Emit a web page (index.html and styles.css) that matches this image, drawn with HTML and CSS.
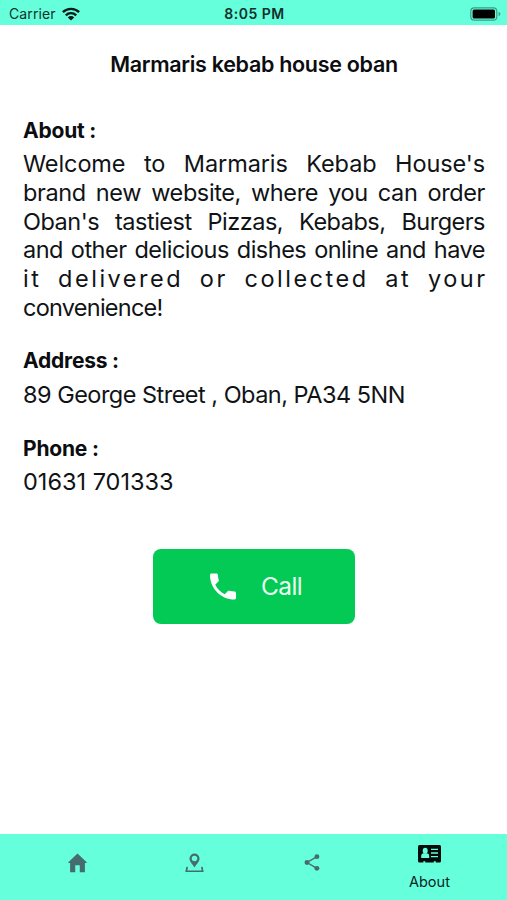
FILE: index.html
```html
<!DOCTYPE html>
<html lang="en">
<head>
<meta charset="utf-8">
<title>About</title>
<link rel="stylesheet" href="styles.css">
</head>
<body>
<header class="status">
  <div class="carrier"><span class="carrier-name">Carrier</span>
    <svg class="wifi" viewBox="0 0 18 14"><g fill="none" stroke="#071c19" stroke-width="2.4"><path d="M.9 5.2a11.5 11.5 0 0 1 16.2 0"/><path d="M3.8 8.3a7.4 7.4 0 0 1 10.4 0"/></g><path fill="#071c19" d="M5.8 10.4a4.6 4.6 0 0 1 6.4 0L9 13.6z"/></svg>
  </div>
  <div class="time">8:05 PM</div>
  <svg class="battery" viewBox="0 0 31 14"><rect x=".8" y=".8" width="26" height="12.4" rx="3.5" fill="none" stroke="#3c9b89" stroke-width="1.2"/><rect x="2.6" y="2.5" width="22.4" height="9" rx="1.6"/><path d="M28.6 4.7q1.8 1 1.8 2.3t-1.8 2.3z" fill="#3c9b89"/></svg>
</header>
<main class="content">
  <h1 class="title">Marmaris kebab house oban</h1>
  <section class="block">
    <h2 class="label">About :</h2>
    <p class="value">
      <span class="line l1">Welcome to Marmaris Kebab House's</span>
      <span class="line l2">brand new website, where you can order</span>
      <span class="line l3">Oban's tastiest Pizzas, Kebabs, Burgers</span>
      <span class="line l4">and other delicious dishes online and have</span>
      <span class="line l5">it delivered or collected at your</span>
      <span class="line last">convenience!</span>
    </p>
  </section>
  <section class="block">
    <h2 class="label">Address :</h2>
    <p class="value"><span class="address">89 George Street , Oban, PA34 5NN</span></p>
  </section>
  <section class="block">
    <h2 class="label">Phone :</h2>
    <p class="value"><span class="phone">01631 701333</span></p>
  </section>
  <button class="call">
    <svg class="call-icon" viewBox="3 3 18 18"><path fill="#fff" d="M6.62 10.79c1.44 2.83 3.76 5.14 6.59 6.59l2.2-2.2c.27-.27.67-.36 1.02-.24 1.12.37 2.33.57 3.57.57.55 0 1 .45 1 1V20c0 .55-.45 1-1 1-9.39 0-17-7.61-17-17 0-.55.45-1 1-1h3.5c.55 0 1 .45 1 1 0 1.25.2 2.45.57 3.57.11.35.03.74-.25 1.02l-2.2 2.2z"/></svg>
    <span class="call-text">Call</span>
  </button>
</main>
<nav class="tabs">
  <a class="tab"><svg class="home" viewBox="0 0 20 20"><path d="M10 0 .3 9.300q-.3.700.5.700H2.200v9.700h5.400v-7.400h4.800v7.400h5.400V10h1.400q.8 0 .5-.7z"/></svg></a>
  <a class="tab"><svg class="pin" viewBox="0 0 20 20"><path fill-rule="evenodd" d="M10 0a5.300 5.300 0 0 0-5.300 5.300C4.700 8.800 7.800 11 10 14.700c2.200-3.700 5.300-5.900 5.300-9.400A5.300 5.300 0 0 0 10 0zm0 2.300a2.900 2.900 0 1 1 0 5.800 2.900 2.900 0 0 1 0-5.800z"/><path d="M2.300 14 1.400 18.700h17.200L17.700 14" fill="none" stroke="#456d70" stroke-width="1.800"/></svg></a>
  <a class="tab"><svg class="share" viewBox="0 0 16 18"><path d="M13.300 2.700 2.700 9l10.600 6.300" fill="none" stroke="#456d70" stroke-width="1.500"/><circle cx="13.200" cy="2.800" r="2.600"/><circle cx="2.700" cy="9" r="2.600"/><circle cx="13.200" cy="15.200" r="2.600"/></svg></a>
  <a class="tab active"><svg class="card" viewBox="0 0 23 18"><path d="M1.500 0h20Q23 0 23 1.500v14.500q0 1.500-1.500 1.500h-3.700v-1.300h-2v1.300H7.300v-1.300h-2v1.300H1.500Q0 17.500 0 16V1.500Q0 0 1.500 0z"/><g fill="#66ffdc"><ellipse cx="7.200" cy="5.800" rx="2.500" ry="3"/><path d="M3.200 12.900v-2q0-2.300 2.200-2.700h3.600q2.200.4 2.200 2.700v2z"/><path d="M13 3.700h7v1.400h-7zM13 7.300h7v1.400h-7zM13 10.900h7v1.400h-7z"/></g></svg><span class="tab-text">About</span></a>
</nav>
</body>
</html>
```
FILE: styles.css
```css
* { box-sizing: border-box; }
body {
  margin: 0;
  width: 507px;
  height: 900px;
  display: flex;
  flex-direction: column;
  overflow: hidden;
  background: #fff;
  color: #101316;
  font-family: Inter, "Liberation Sans", sans-serif;
}
h1, h2, p { margin: 0; }
svg { display: block; }
.status {
  height: 25px;
  display: grid;
  grid-template-columns: 1fr auto 1fr;
  align-items: center;
  padding: 2px 6px 0 9px;
  background: #66ffdc;
  color: #12312d;
  font-size: 14px;
}
.carrier { display: flex; align-items: center; gap: 6px; }
.carrier-name { letter-spacing: .1px; }
.wifi { width: 18px; height: 14px; }
.time { font-weight: 600; letter-spacing: .5px; margin-right: 1px; }
.battery { width: 31px; height: 14px; justify-self: end; }
.content { flex: 1; display: flex; flex-direction: column; padding: 26px 22px 0 23px; }
.title {
  height: 26px;
  line-height: 26px;
  margin-bottom: 40.600px;
  text-align: center;
  font-size: 21.5px;
  font-weight: 600;
  letter-spacing: -.3px;
  white-space: nowrap;
  color: #0b0d10;
}
.block { margin-bottom: 26px; }
.label {
  height: 26px;
  line-height: 26px;
  margin-bottom: 6.500px;
  font-size: 21px;
  font-weight: 700;
  letter-spacing: -.2px;
  color: #0b0d10;
}
.value { font-size: 23.5px; line-height: 28.700px; }
.line { display: block; white-space: nowrap; text-align: justify; text-align-last: justify; }
.l1 { letter-spacing: -.1px; }
.l2 { letter-spacing: -.400px; }
.l3 { letter-spacing: -.500px; }
.l4 { letter-spacing: -.500px; }
.l5 { letter-spacing: 2.500px; margin-right: -2.500px; }
.last { text-align-last: left; letter-spacing: -.750px; }
.address { letter-spacing: -.520px; }
.phone { letter-spacing: 0; }
.call {
  width: 202px;
  height: 75px;
  margin: 26px 0 0 130px;
  padding: 0 0 0 57px;
  display: flex;
  align-items: center;
  gap: 25px;
  border: 0;
  border-radius: 8px;
  background: #03ca54;
  color: #e9fff1;
  font: 400 24.500px Inter, sans-serif;
}
.call-icon { width: 26px; height: 27px; }
.call-text { letter-spacing: -.6px; }
.tabs {
  height: 66px;
  display: grid;
  grid-template-columns: repeat(4, 117.300px);
  justify-content: center;
  background: #66ffdc;
}
.tab {
  display: flex;
  flex-direction: column;
  align-items: center;
  padding-top: 19px;
  fill: #456d70;
}
.active { padding-top: 11px; fill: #020d0b; color: #08231f; }
.home { width: 19px; height: 20px; }
.pin { width: 19px; height: 20px; }
.share { width: 16px; height: 17px; margin-top: 1px; }
.card { width: 23px; height: 18px; }
.tab-text { margin-top: 10px; font-size: 14.500px; line-height: 18px; }
```
